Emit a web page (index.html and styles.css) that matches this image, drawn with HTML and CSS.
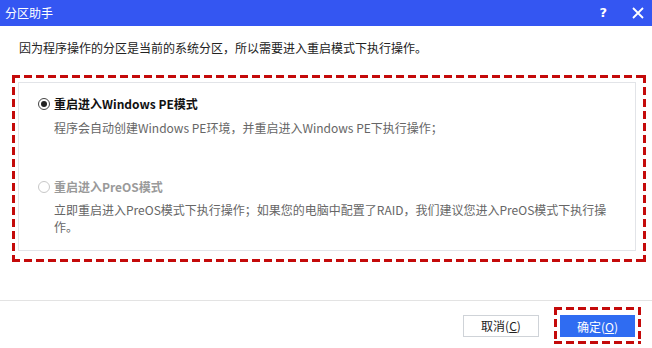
FILE: index.html
```html
<!DOCTYPE html>
<html lang="zh-CN">
<head>
    <meta charset="UTF-8">
    <title>分区助手</title>
    <link rel="stylesheet" href="styles.css">
</head>
<body>

    <div class="dialog">
        <!-- Title bar -->
        <div class="titlebar">
            <span class="title">分区助手</span>
            <div class="title-tools">
                <span class="help">?</span>
                <svg class="close" width="12" height="12" viewBox="0 0 12 12">
                    <path d="M1 1 L11 11 M11 1 L1 11" stroke="#fff" stroke-width="1.8" fill="none"/>
                </svg>
            </div>
        </div>

        <p class="message">因为程序操作的分区是当前的系统分区，所以需要进入重启模式下执行操作。</p>

        <!-- Options -->
        <div class="mark">
            <div class="options">
                <div class="option">
                    <div class="option-label">
                        <span class="radio checked"></span>
                        <span>重启进入Windows PE模式</span>
                    </div>
                    <p class="option-desc">程序会自动创建Windows PE环境，并重启进入Windows PE下执行操作；</p>
                </div>
                <div class="option disabled">
                    <div class="option-label">
                        <span class="radio"></span>
                        <span>重启进入PreOS模式</span>
                    </div>
                    <p class="option-desc">立即重启进入PreOS模式下执行操作；如果您的电脑中配置了RAID，我们建议您进入PreOS模式下执行操<br>作。</p>
                </div>
            </div>
        </div>

        <!-- Footer -->
        <div class="footer">
            <button class="btn">取消(<u>C</u>)</button>
            <div class="mark mark-btn">
                <button class="btn btn-primary">确定(<u>O</u>)</button>
            </div>
        </div>
    </div>

</body>
</html>
```

FILE: styles.css
```css
body {
    margin: 0;
    padding: 0;
    background-color: #fff;
    font-family: "Noto Sans CJK SC", "Noto Sans", sans-serif;
    font-size: 12px;
    color: #222;
}

.dialog {
    width: 652px;
    height: 348px;
    background-color: #fff;
}

.titlebar {
    height: 26px;
    background-color: #3456f2;
    color: #fff;
    display: flex;
    align-items: center;
    justify-content: space-between;
    padding-left: 5px;
}

.title {
    font-size: 12px;
    line-height: 16px;
}

.title-tools {
    display: flex;
    align-items: center;
    gap: 25px;
    padding-right: 8px;
}

.help {
    font-family: "DejaVu Sans", sans-serif;
    font-weight: bold;
    font-size: 13px;
    line-height: 16px;
}

.close {
    display: block;
}

.message {
    margin: 14px 0 19px 19px;
    line-height: 16px;
}

/* red dashed highlight */
.mark {
    background:
        repeating-linear-gradient(90deg, #c40a0a 0 8px, transparent 8px 12px) top left / 100% 3px no-repeat,
        repeating-linear-gradient(90deg, #c40a0a 0 8px, transparent 8px 12px) bottom left / 100% 3px no-repeat,
        repeating-linear-gradient(180deg, #c40a0a 0 8px, transparent 8px 12px) top left / 3px 100% no-repeat,
        repeating-linear-gradient(180deg, #c40a0a 0 8px, transparent 8px 12px) top right / 3px 100% no-repeat;
}

.mark > .options {
    margin: 0;
}

.dialog > .mark {
    margin: 0 6px 0 12px;
    padding: 7px 10px 11px 6px;
}

.options {
    border: 1px solid #e2e4e8;
    height: 167px;
    box-sizing: content-box;
}

.option {
    padding-left: 19px;
}

.option:first-child {
    padding-top: 13px;
}

.option.disabled {
    margin-top: 43px;
}

.option-label {
    display: flex;
    align-items: center;
    gap: 4px;
    font-weight: bold;
    line-height: 16px;
    color: #111;
}

.option.disabled .option-label {
    color: #9a9a9a;
}

.radio {
    width: 10px;
    height: 10px;
    border: 1px solid #444;
    border-radius: 50%;
    position: relative;
    background: #fff;
}

.radio.checked::after {
    content: "";
    position: absolute;
    left: 2px;
    top: 2px;
    width: 6px;
    height: 6px;
    border-radius: 50%;
    background: #222;
}

.option.disabled .radio {
    border-color: #c8c8c8;
}

.option-desc {
    margin: 7px 0 0 16px;
    color: #666;
    line-height: 17px;
    white-space: nowrap;
}

.option.disabled .option-desc {
    margin-top: 6px;
}

.footer {
    margin-top: 38px;
    border-top: 1px solid #e3e3e3;
    display: flex;
    justify-content: flex-end;
    align-items: center;
    gap: 15px;
    padding: 6px 11px 0 0;
}

.btn {
    width: 76px;
    height: 22px;
    border: 1px solid #cfd3d8;
    background: #fff;
    font-family: "Noto Sans CJK SC", sans-serif;
    font-size: 12px;
    color: #222;
    padding: 0;
    cursor: pointer;
}

.btn-primary {
    display: block;
    width: 75px;
    background-color: #2f6cf2;
    border-color: #2f6cf2;
    color: #fff;
}

.mark-btn {
    padding: 8px 6px 7px 6px;
}
```
